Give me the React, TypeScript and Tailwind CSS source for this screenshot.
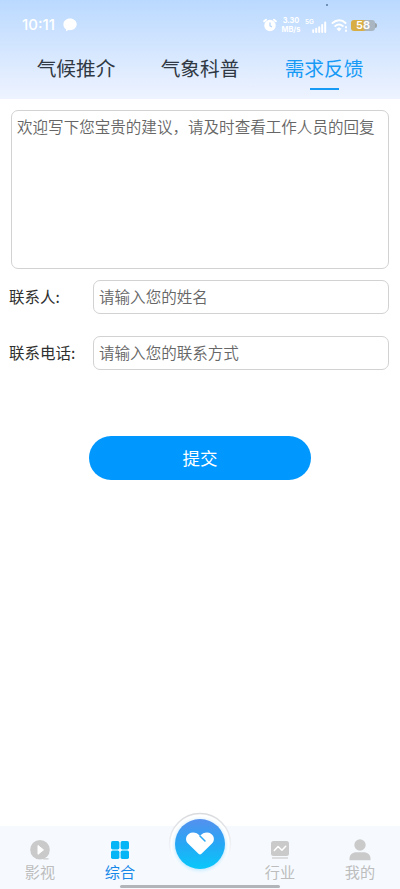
import React from "react";

const tabs = ["气候推介", "气象科普", "需求反馈"];

function StatusBar() {
  return (
    <div className="flex h-[46px] items-start justify-between pr-[23px] pl-[22px] text-white">
      <div className="flex items-center gap-[6px] pt-[16px]">
        <span className="h-[18px] w-[35px] font-['Inter'] text-[15px] leading-[18px] font-medium whitespace-nowrap">10:11</span>
        <svg width="14" height="14" viewBox="0 0 14 14" fill="currentColor">
          <path d="M7 .5C3.200.5.400 3 .400 6.300c0 2.400 1 4.100 2.700 5v1.900l2.400-1.100c4.700.5 8.200-2.100 8.200-5.800C13.700 3 10.800.5 7 .5Z" />
        </svg>
      </div>
      <div className="flex items-center pt-[16px]">
        <svg width="14" height="14" viewBox="0 0 14 14">
          <path d="M1.200 3.300 3 1.700M12.800 3.300 11 1.700" stroke="white" strokeWidth="2" strokeLinecap="round" />
          <circle cx="7" cy="7.500" r="5.700" fill="white" />
          <path d="M7 4.500v3.400l2 1" fill="none" stroke="#b9d8fa" strokeWidth="1.300" />
        </svg>
        <div className="ml-[3px] flex w-[22px] flex-col items-center font-['Inter'] font-bold whitespace-nowrap">
          <span className="block h-[9px] text-[7.4px] leading-[9px]">3.30</span>
          <span className="block h-[9px] text-[7.4px] leading-[9px]">MB/s</span>
        </div>
        <svg className="ml-[3px]" width="22" height="17" viewBox="0 0 22 17">
          <text x="0" y="6.500" fill="white" fontFamily="Inter" fontSize="6.500" fontWeight="600">5G</text>
          <path d="M8.200 15v-1.800M11.200 15v-3.300M14.200 15v-4.800M17.200 15V8M20.200 15V5.500" stroke="white" strokeWidth="2" strokeLinecap="round" />
        </svg>
        <svg className="ml-[4px]" width="18" height="15" viewBox="0 0 18 15" fill="none" stroke="white" strokeWidth="2" strokeLinecap="round">
          <path d="M1.500 5c4-3.700 9.500-3.700 13 0M4.200 8c2.500-2 5.100-2 7.600 0" />
          <path d="M8 9.300 5.500 10.800 8 13.500l2.500-2.700Z" fill="white" stroke="none" />
          <path d="M15 9v.5M15 12.500v.500" strokeWidth="2" />
        </svg>
        <div className="ml-[2px] flex items-center">
          <div className="h-[11px] w-[24px] rounded-[3px] bg-linear-to-r from-[#d8ad43] from-50% to-[#a9b6c2] to-65% text-center font-['Inter'] text-[11px] leading-[11px] font-semibold">58</div>
          <div className="h-[5px] w-[2px] rounded-r bg-[#9aa3aa]" />
        </div>
      </div>
    </div>
  );
}

function Field({ label, placeholder }: { label: string; placeholder: string }) {
  return (
    <label className="flex h-[34px] items-center">
      <span className="w-[84px] text-[15.5px] whitespace-nowrap text-[#303030]">{label}</span>
      <input
        className="h-[34px] w-[296px] rounded-[7px] border border-[#d2d2d2] bg-white px-[5px] pb-[2px] text-[15.55px] font-[350] outline-none placeholder:text-[#666666]"
        placeholder={placeholder}
      />
    </label>
  );
}

function NavItem({ label, active = false, children }: { label: string; active?: boolean; children: React.ReactNode }) {
  return (
    <button className={`flex w-[80px] flex-col items-center pt-[13px] ${active ? "text-[#1688e8]" : "text-[#bdbdbd]"}`}>
      <span className="flex h-[22px] items-center justify-center">{children}</span>
      <span className="text-[15.2px] leading-[21px]">{label}</span>
    </button>
  );
}

export default function App() {
  return (
    <main className="flex h-[889px] w-[400px] flex-col overflow-hidden bg-white font-['Noto_Sans_CJK_SC',sans-serif]">
      <header className="relative h-[99px] shrink-0 bg-linear-to-b from-[#bad9ff] to-[#eef3ff]">
        <div className="absolute top-[4px] left-[326px] size-[2px] rounded-full bg-[#587aa0]" />
        <StatusBar />
        <nav className="flex h-[53px] gap-[46px] pl-[37px]">
          {tabs.map((tab, i) => (
            <button
              key={tab}
              className={`flex w-[78px] flex-col items-center text-[19.7px] leading-[44px] whitespace-nowrap ${i === 2 ? "text-[#169af5]" : "text-[#303943]"}`}
            >
              <span className="h-[42px]">{tab}</span>
              {i === 2 && <span className="h-[2px] w-[29px] bg-[#169af5]" />}
            </button>
          ))}
        </nav>
      </header>

      <form className="flex flex-1 flex-col pt-[11px]">
        <textarea
          className="mx-[11px] block h-[159px] w-[378px] resize-none rounded-[7px] border border-[#d2d2d2] bg-white px-[5px] py-[4px] text-[15.55px] leading-[23px] font-[350] outline-none placeholder:text-[#666666]"
          placeholder="欢迎写下您宝贵的建议，请及时查看工作人员的回复"
        />
        <div className="mt-[11px] flex flex-col gap-[22px] pl-[9px]">
          <Field label="联系人:" placeholder="请输入您的姓名" />
          <Field label="联系电话:" placeholder="请输入您的联系方式" />
        </div>
        <button type="button" className="mx-auto mt-[66px] h-[44px] w-[222px] rounded-full bg-[#0098ff] text-[17.5px] text-white">
          提交
        </button>
      </form>

      <footer className="relative flex h-[63px] shrink-0 bg-[#f6faff]">
        <NavItem label="影视">
          <svg width="20" height="20" viewBox="0 0 20 20">
            <circle cx="10" cy="9.800" r="9.800" fill="#cacaca" />
            <path d="M13 18.300h5.500v1.200h-5Z" fill="#cacaca" />
            <path d="M8 5.500v8.800l5.500-4.400Z" fill="white" stroke="white" strokeLinejoin="round" />
          </svg>
        </NavItem>
        <NavItem label="综合" active>
          <svg width="18" height="18" viewBox="0 0 18 18" fill="#05b5f5">
            <rect width="8.400" height="8.400" rx="1.700" />
            <rect x="9.600" width="8.400" height="8.400" rx="1.700" />
            <rect y="9.600" width="8.400" height="8.400" rx="1.700" />
            <rect x="9.600" y="9.600" width="8.400" height="8.400" rx="1.700" />
          </svg>
        </NavItem>
        <div className="w-[80px]" />
        <NavItem label="行业">
          <svg width="18" height="18" viewBox="0 0 18 18">
            <rect width="18" height="15" rx="2.500" fill="#cacaca" />
            <path d="M1 17h16" stroke="#cacaca" strokeWidth="1.200" />
            <path d="m3.300 9.500 3.800-4 3.800 3.700 3.800-4" fill="none" stroke="white" strokeWidth="1.500" strokeLinecap="round" strokeLinejoin="round" />
          </svg>
        </NavItem>
        <NavItem label="我的">
          <svg width="22" height="22" viewBox="0 0 22 22" fill="#cacaca">
            <circle cx="11" cy="6" r="5.700" />
            <path d="M.5 21.300v-1.800c0-4 3-6.300 7-6.300h7c4 0 7 2.300 7 6.300v1.800Z" />
          </svg>
        </NavItem>
        <button className="absolute top-[-15px] left-[167px] size-[66px]">
          <svg width="66" height="70" viewBox="0 0 66 70">
            <defs>
              <linearGradient id="heart-bg" x1="0" y1="0" x2="0" y2="1">
                <stop stopColor="#5590ee" />
                <stop offset=".5" stopColor="#26a7f5" />
                <stop offset="1" stopColor="#08c8fa" />
              </linearGradient>
              <linearGradient id="ring-edge" x1="0" y1="0" x2="0" y2="1">
                <stop stopColor="#d9dbde" />
                <stop offset=".4" stopColor="#e9ecf0" />
                <stop offset=".7" stopColor="#f6faff" />
              </linearGradient>
              <radialGradient id="glow">
                <stop offset=".8" stopColor="#bfe8ff" />
                <stop offset="1" stopColor="#f6faff" stopOpacity="0" />
              </radialGradient>
              <linearGradient id="ring-fill" x1="0" y1="0" x2="0" y2="1">
                <stop offset=".45" stopColor="#ffffff" />
                <stop offset=".85" stopColor="#f6faff" />
              </linearGradient>
            </defs>
            <circle cx="33" cy="33" r="30.500" fill="url(#ring-fill)" stroke="url(#ring-edge)" strokeWidth="1.500" />
            <circle cx="33" cy="34" r="29.500" fill="url(#glow)" />
            <circle cx="33" cy="33" r="25" fill="url(#heart-bg)" />
            <g transform="translate(8 8)">
              <path d="M23.500 34.700 13 24.600C8.800 20.300 11.800 13.500 18 13.500c2.800 0 5 1.200 7 3.300 2-2.100 4.200-3.300 7-3.300 6.200 0 9.200 6.800 5 11.100L26.500 34.700c-1 .9-2 .9-3 0Z" fill="white" />
              <path d="m25 17 5 5" stroke="#29a8f3" strokeWidth="1.500" strokeLinecap="round" />
            </g>
          </svg>
        </button>
        <div className="absolute bottom-[1px] left-[120px] h-[3px] w-[160px] rounded-full bg-[#b2b5b9]" />
      </footer>
    </main>
  );
}
